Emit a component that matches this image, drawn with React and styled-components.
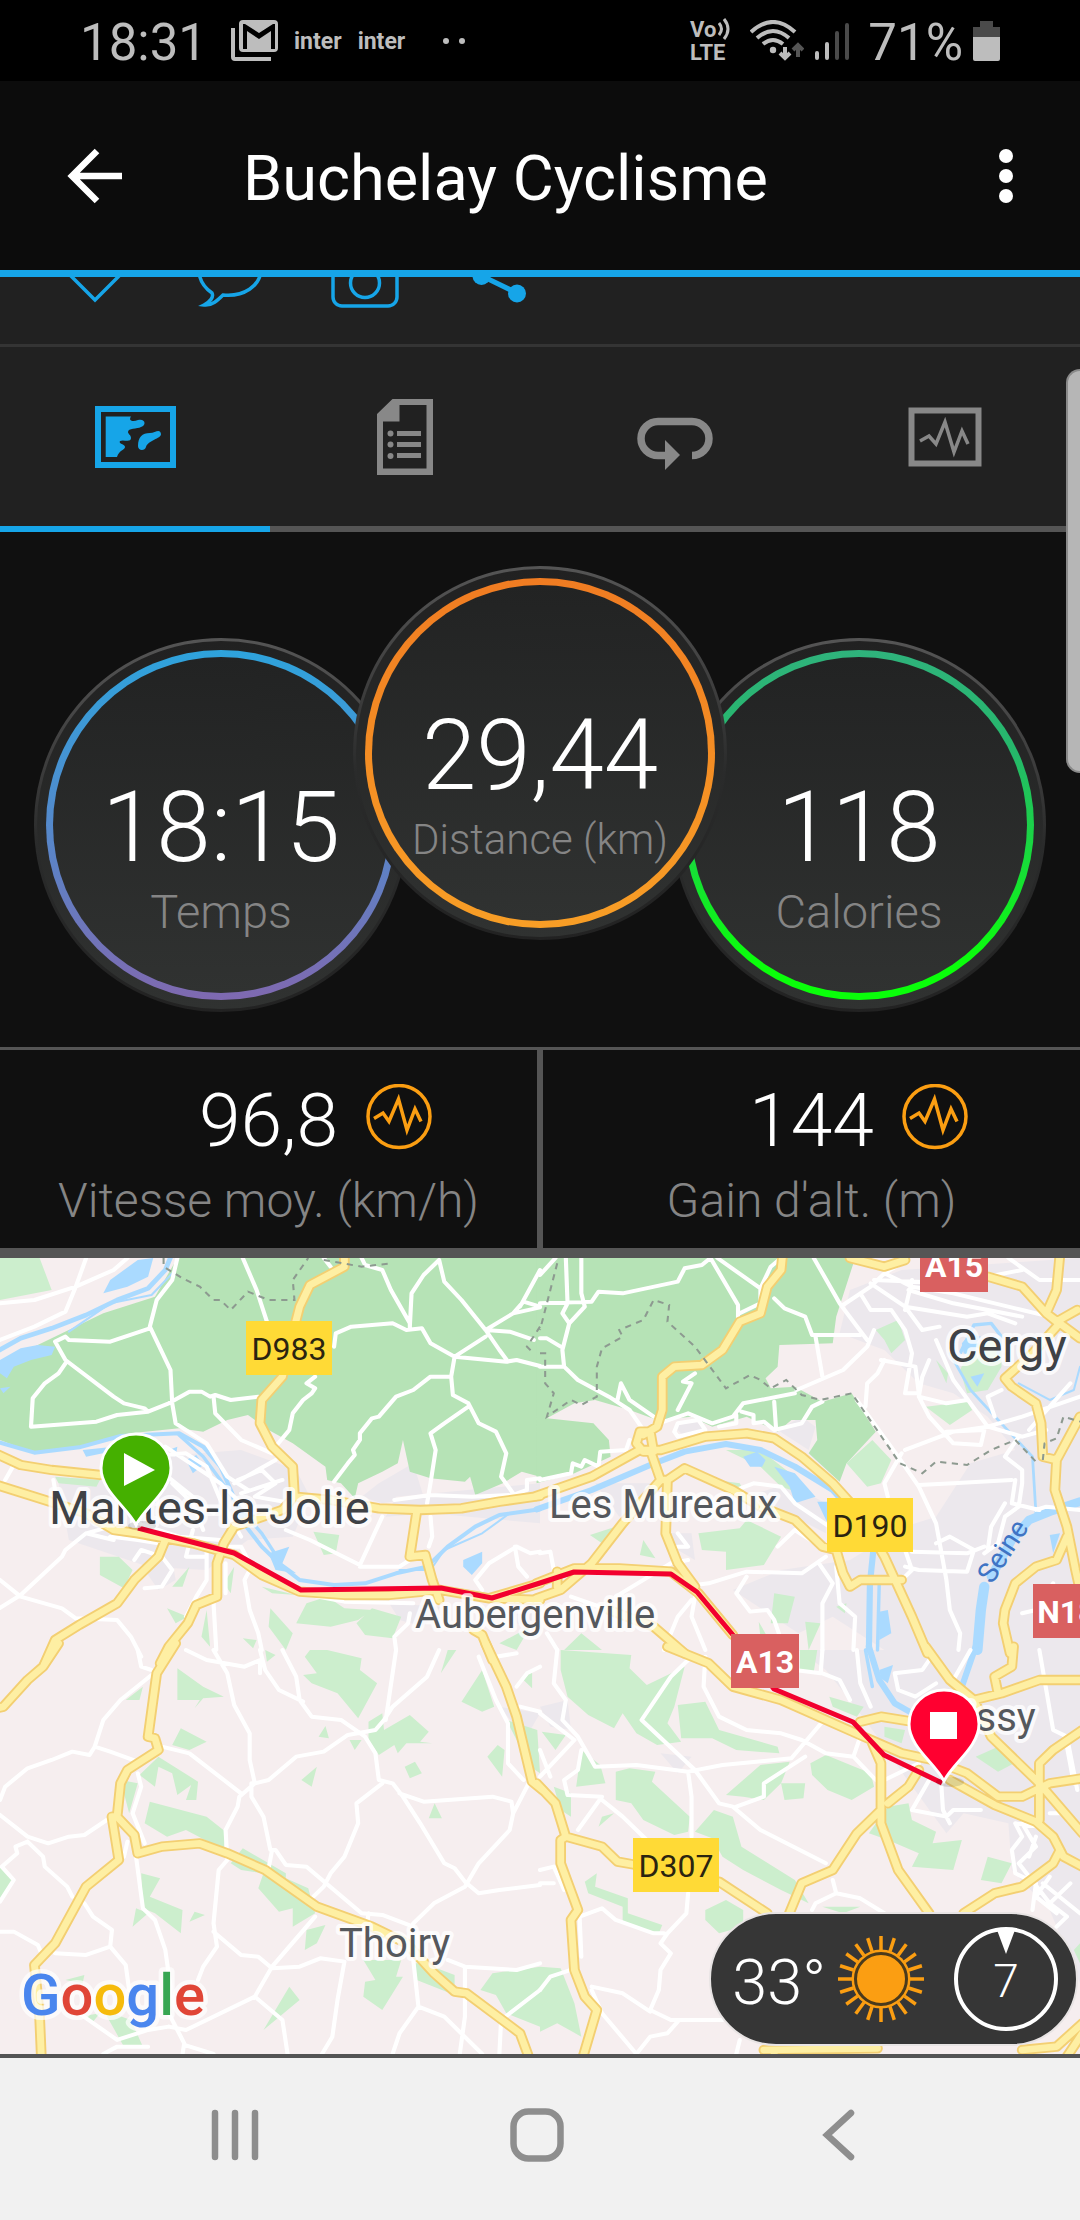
import React from 'react';
import styled, { createGlobalStyle } from 'styled-components';

const colors = {
  accent: '#16a5e8',
  orange: '#fb9e12',
  line: '#555555',
  surface: '#212121',
  base: '#101010',
  muted: '#858585',
  status: '#bdbdbd',
};

const GlobalStyle = createGlobalStyle`
  *, *::before, *::after { box-sizing: border-box; }
  body {
    margin: 0;
    background: #f1f1f1;
    font-family: Roboto, "Noto Sans", sans-serif;
    color: #fff;
  }
  button {
    margin: 0;
    padding: 0;
    border: 0;
    background: none;
    color: inherit;
    font: inherit;
    cursor: pointer;
  }
  svg { display: block; flex: none; }
`;

const Screen = styled.div`
  display: flex;
  flex-direction: column;
  min-height: 100vh;
`;

/* ---------- status bar ---------- */

const StatusBar = styled.div`
  display: flex;
  align-items: center;
  justify-content: space-between;
  height: 81px;
  padding: 0 80px;
  background: #000;
  color: ${colors.status};
`;

const StatusGroup = styled.div`
  display: flex;
  align-items: center;
  gap: ${(p) => p.$gap}px;
`;

const StatusText = styled.span`
  padding: ${(p) => (p.$clock ? '4px 8px 0 0' : '4px 0 0 8px')};
  font-size: 51px;
  line-height: 60px;
`;

const InterMark = styled.span`
  padding-top: 2px;
  font-size: 23px;
  line-height: 28px;
  font-weight: 700;
`;

const VoLte = styled.span`
  display: flex;
  flex-direction: column;
  padding-right: 10px;
  font-size: 22px;
  line-height: 23px;
  font-weight: 700;
`;

const VoLine = styled.span`
  display: flex;
  gap: 2px;
`;

/* ---------- header ---------- */

const Header = styled.header`
  display: flex;
  align-items: center;
  height: 196px;
  padding: 0 42px 0 63px;
  background: #0c0c0c;
  border-bottom: 7px solid ${colors.accent};
`;

const IconButton = styled.button`
  display: flex;
  align-items: center;
  justify-content: center;
  width: 64px;
  height: 64px;
`;

const Title = styled.h1`
  flex: 1;
  margin: 0;
  padding: 6px 0 0 116px;
  font-size: 63px;
  line-height: 72px;
  font-weight: 400;
`;

/* ---------- scrolled content ---------- */

const Content = styled.main`
  position: relative;
  flex: 1;
`;

const ScrollThumb = styled.div`
  position: absolute;
  z-index: 2;
  top: 92px;
  right: 0;
  width: 14px;
  height: 404px;
  background: #b6b6b6;
  border: 2px solid #8a8a8a;
  border-right: 0;
  border-radius: 14px 0 0 14px;
`;

const Actions = styled.div`
  display: flex;
  align-items: flex-end;
  height: 70px;
  padding: 0 27px 32px;
  overflow: hidden;
  background: ${colors.surface};
  border-bottom: 3px solid #343434;
`;

const ActionButton = styled.button`
  display: flex;
  justify-content: center;
  width: 135px;
  color: ${colors.accent};
`;

const Tabs = styled.div`
  display: grid;
  grid-template-columns: repeat(4, 1fr);
  background: ${colors.surface};
`;

const Tab = styled.button`
  display: flex;
  align-items: center;
  justify-content: center;
  height: 185px;
  color: ${(p) => (p.$active ? colors.accent : '#888')};
  border-bottom: 6px solid ${(p) => (p.$active ? colors.accent : colors.line)};
`;

const Dials = styled.section`
  display: flex;
  justify-content: center;
  align-items: flex-start;
  padding: 34px 0 35px;
  background: ${colors.base};
`;

const Dial = styled.div`
  position: relative;
  z-index: ${(p) => (p.$raised ? 1 : 0)};
  width: 374px;
  height: 374px;
  margin: ${(p) => (p.$raised ? '0 -55px' : '72px 0 0')};
  padding: 9px;
  border: 3px solid transparent;
  border-radius: 50%;
  background:
    linear-gradient(#212121, #303231) padding-box,
    linear-gradient(#555 0%, #3c3c3c 35%, #2a2b2b 55%, #222 100%) border-box;
`;

const Ring = styled.div`
  display: flex;
  flex-direction: column;
  align-items: center;
  gap: 4px;
  height: 100%;
  padding-top: 121px;
  border: 7px solid transparent;
  border-radius: 50%;
  background:
    linear-gradient(#222323, #303231) padding-box,
    linear-gradient(${(p) => p.$ring}) border-box;
`;

const DialValue = styled.span`
  font-size: 98px;
  line-height: 100px;
  font-weight: 300;
`;

const DialLabel = styled.span`
  font-size: ${(p) => (p.$long ? 42 : 47)}px;
  line-height: 60px;
  font-weight: 300;
  white-space: nowrap;
  color: ${colors.muted};
`;

const Measures = styled.section`
  display: grid;
  grid-template-columns: 1fr 1fr;
  gap: 6px;
  border-top: 3px solid ${colors.line};
  border-bottom: 10px solid ${colors.line};
  background: ${colors.line};
`;

const Measure = styled.div`
  display: flex;
  flex-direction: column;
  gap: 11px;
  padding: 30px 0 17px;
  background: ${colors.base};
`;

const MeasureRow = styled.div`
  display: grid;
  grid-template-columns: 1fr auto 1fr;
  align-items: center;
  column-gap: 28px;
`;

const MeasureValue = styled.span`
  grid-column: 2;
  font-size: 75px;
  line-height: 80px;
  font-weight: 300;
`;

const MeasureLabel = styled.span`
  font-size: 48px;
  line-height: 60px;
  font-weight: 300;
  text-align: center;
  color: ${colors.muted};
`;

/* ---------- map ---------- */

const MapPanel = styled.section`
  position: relative;
  border-bottom: 4px solid #545454;
`;

const MapCanvas = styled.svg`
  width: 100%;
  height: auto;
  font-family: Roboto, "Noto Sans", sans-serif;
`;

const Weather = styled.div`
  position: absolute;
  right: 2px;
  bottom: 8px;
  display: flex;
  align-items: center;
  height: 134px;
  padding: 0 17px 0 21px;
  gap: 12px;
  background: #363636;
  border: 2px solid #e8e4e4;
  border-radius: 67px;
`;

const Temperature = styled.span`
  font-size: 63px;
  line-height: 72px;
  font-weight: 300;
  padding-top: 8px;
`;

const Wind = styled.div`
  display: grid;
  place-items: center;
  margin-left: 17px;
  > * { grid-area: 1 / 1; }
`;

const WindValue = styled.span`
  font-size: 46px;
  line-height: 56px;
  font-weight: 300;
  padding-top: 4px;
`;

/* ---------- navigation bar ---------- */

const NavBar = styled.nav`
  display: flex;
  align-items: center;
  justify-content: center;
  gap: 238px;
  height: 162px;
  padding-right: 6px;
  padding-bottom: 8px;
  background: #f1f1f1;
  color: #8e8e8e;
`;

/* Map geometry, cut in four tiles of 1568 x 1200 units each */
const TILES = [
  {
    transform: 'translate(0 -8) scale(.3444 .3333)',
    urban:
      'M450 620 700 600 860 660 900 740 850 860 720 870 600 960 430 950 200 870 170 700Z M1150 740 1568 700 1568 820 1250 790 1120 800Z M1200 640 1100 700 1050 740 1110 760 1230 740Z M420 960 500 930 510 990 460 1020Z M1130 1060 1280 1070 1230 1130 1160 1110Z M1480 1050 1568 1060 1568 1140 1500 1120Z',
    forest:
      'M515 24 1568 24 1568 680 1515 665 1460 700 1380 735 1365 680 1350 695 1250 685 1190 665 1170 570 1155 640 1110 665 1040 700 1030 745 990 700 950 690 945 650 850 580 780 540 720 495 660 510 590 545 520 535 380 550 230 590 100 610 0 570 0 340 150 265 300 190 450 140Z',
    park:
      'M0 24 115 24 150 120 0 150Z M290 920 345 920 385 960 360 1015 290 975Z M910 845 985 855 975 910 940 915Z M890 1060 950 1040 1000 1075 1080 1080 1040 1110 960 1130 860 1120Z M1035 1120 1080 1075 1165 1100 1140 1165 1060 1155Z M785 1075 850 1150 830 1200 780 1130Z M500 1010 550 950 530 1010Z M650 1000 680 950 670 1030Z M160 680 290 690 280 710 170 700Z M485 1075 545 1100 510 1120Z M600 1080 610 1190 585 1160Z M760 1010 860 1035 790 1030Z M705 1165 745 1170 735 1195Z M1390 1100 1400 1070 1420 1090Z M1450 1180 1540 1130 1500 1200Z',
    lake:
      'M300 130 320 90 400 30 445 24 430 80 370 110Z M0 330 60 295 110 285 160 290 150 315 90 330 40 350 20 385 0 370Z M0 415 30 410 10 430Z M540 630 570 615 590 645 560 670Z M1345 930 1400 905 1400 940 1370 975 1345 950Z M780 910 840 890 820 940 860 970 800 960Z M240 600 330 590 320 605 250 620Z M490 600 515 590 510 620Z',
    rivers: [
      [14, 'M-10 305 60 265 150 235 250 195 340 150 430 115 480 60 500 10'],
      [6, 'M200 245 320 160 440 135 500 70'],
      [12, 'M-10 575 100 608 230 592 350 558 520 550 590 590 640 650 670 720 715 830 760 890 820 950 870 990 970 1005 1060 1000 1150 970 1240 950 1300 890 1380 830 1450 795 1568 778'],
      [10, 'M520 555 590 620 640 690 700 780 760 850 810 930'],
      [6, 'M1160 960 1250 960 1290 900 1400 850 1480 790'],
    ],
    white:
      'M0 160 100 150 220 110 330 60 370 24M250 24 220 110 190 185 100 230 0 270M515 24 500 90 455 150 435 230 495 360 500 460 510 520 600 580 660 680 720 720M435 235 320 275 200 270 190 260 160 275 190 330 330 440 360 460 420 475 430 485 340 495 280 515 90 530 95 445 130 400 170 370 190 340M430 485 490 460 550 425 585 425 610 440 625 435 670 450 750 440M620 440 625 490 700 570 790 610M705 24 745 120 775 215M940 24 960 50M915 380 890 400 915 415 905 430 880 450 850 490 840 540 800 590M970 290 975 250 1020 230 1140 220 1180 240 1225 235 1250 280 1320 320 1470 335 1500 330 1568 348M1050 24 1060 45 1110 60 1135 120 1190 220 1190 235M1190 230 1195 130 1230 75 1275 30 1290 95 1340 150 1410 240 1450 300 1475 335M1320 320 1410 260M1410 240 1490 190 1520 155 1568 170M1490 190 1568 172M1410 240 1480 245 1550 270M1568 60 1510 170M1320 320 1310 380 1315 435 1360 460 1390 520 1440 545 1470 610 1455 680 1490 730M1310 380 1250 380 1200 420 1150 440 1100 500 1080 505 1045 550 1045 570 1025 600 1030 615 1010 640 970 695M1360 470 1290 520 1250 550 1265 600 1250 700 1240 760M1145 750 1250 735 1370 740 1490 735 1530 720 1530 690 1568 685M1110 800 1045 945 900 870 830 840M1045 950 1160 950 1190 930M1250 800 1255 860 1245 890M0 990 60 1040 180 1075 220 1105 340 1110 380 1160 410 1220M-10 1080 60 1035 180 920 190 900 250 850 320 830M390 930 410 900 470 920 500 960 470 1010 420 1015M600 900 600 990 570 1040 540 1100M655 940 655 1030M620 1060 628 1200M640 890 700 890 730 950 710 990 725 1080 750 1150 760 1200M870 1030 1000 1055 1200 1060M1190 1090 1185 1120 1145 1160 1150 1200M1568 905 1540 910 1500 890 1420 940 1380 990 1400 1020M1495 890 1505 950 1530 980M40 645 15 690M155 690 160 720M450 650 620 790M480 590 640 700 740 800M420 620 540 610 600 650 640 750 700 860M500 700 560 760 590 840M690 690 760 660 800 700 740 740 850 760M680 700 800 630M700 730 820 690M560 840 540 920 600 920M400 820 520 860 640 870M320 860 400 870 460 880M250 850 330 870',
    yellow:
      'M-10 612 60 645 150 660 290 675M-10 705 130 750 250 790 330 840 400 850 560 880 680 915 760 975 870 1025 1000 1035 1130 1035 1280 1020 1420 1045 1568 1000M1000 10 1000 50 900 105 870 170 850 250 820 380 760 450 755 520 790 590 850 650 855 740 820 780 680 830 650 880 630 940 630 1040 570 1065 545 1120 490 1190 465 1240M480 870 460 920 390 990 340 1060 230 1125 160 1170 130 1240M855 740 960 750 1100 775 1220 780 1340 775 1450 755 1568 738M1210 785 1190 920 1235 915 1255 990 1275 1050M1375 1140 1400 1155 1430 1230M1430 1045 1568 1050',
    border:
      'M475 24 475 50 530 85 580 110 620 150 640 150 670 180 720 125 780 150 855 150 850 90 895 24M940 30 1050 50 1140 40M1568 230 1530 290 1550 310',
  },
  {
    transform: 'translate(540 -8) scale(.3444 .3333)',
    urban:
      'M900 120 1050 60 1568 24 1568 1200 1000 1200 850 1100 750 1150 560 1020 700 960 900 930 1060 830 1150 800 1250 640 1380 600 1300 500 1200 430 1100 400 1000 300 870 250Z M390 530 450 510 480 540 420 560Z M600 740 720 700 830 760 830 850 700 780Z M690 540 760 500 800 530 780 600Z M160 700 330 700 340 760 230 800Z M370 850 440 850 450 930 400 900Z',
    forest:
      'M-10 24 915 24 860 200 850 280 695 285 690 350 655 385 670 415 740 410 820 455 905 430 975 545 890 640 870 695 780 610 805 570 800 510 730 510 690 545 600 500 500 530 440 500 340 510 260 480 160 450 100 460 20 505 155 520 200 570 205 620 100 670 -10 700Z',
    park:
      'M890 640 965 570 1020 630 990 700 950 710Z M460 850 580 835 600 810 700 860 650 945 540 960 540 905 470 900Z M290 915 300 870 335 925Z M145 855 250 820 180 880Z M1120 470 1240 455 1255 480 1190 525Z M975 240 1040 210 1060 270 1020 310 1000 270Z M1250 290 1340 260 1340 350 1300 420 1240 430 1220 360Z M680 1030 740 1040 720 1120 670 1120Z M770 1115 815 1120 780 1200Z M860 1070 890 1060 885 1090Z M510 690 580 700 600 740 540 730Z M70 1200 120 1150 180 1200Z M540 600 640 600 740 680 790 740 700 710 640 650Z M1150 330 1185 370 1180 400Z M635 1115 660 1160 640 1160Z',
    lake:
      'M590 620 630 605 655 630 645 650 610 650Z M680 650 740 670 800 740 740 760 725 710Z M805 755 835 755 835 820Z M985 1085 1010 1080 1020 1150 985 1170Z M1480 855 1510 850 1490 910Z M1225 280 1250 250 1280 260 1260 320 1230 310Z M1250 380 1290 370 1270 410Z',
    rivers: [
      [18, 'M-10 778 150 720 320 645 420 605 540 582 640 600 740 650 850 720 920 800 968 900 958 1000 955 1200'],
      [10, 'M985 1000 980 1200'],
      [8, 'M1190 310 1250 420 1330 510 1430 620 1440 790'],
      [6, 'M1568 350 1550 420 1480 450 1390 400'],
      [10, 'M1220 310 1260 225 1310 220 1340 260 1330 310'],
      [26, 'M1568 755 1480 785 1420 810 1370 870 1310 980'],
      [30, 'M1290 1010 1280 1080 1270 1200'],
    ],
    white:
      'M75 24 80 160 65 190 85 220 65 300 70 350 0 350M0 160 150 155 170 125 240 130 400 95 420 55 470 45 495 24M120 24 120 130 130 170 85 220M0 265 20 265 60 290M0 75 45 24M70 350 110 390 200 440 260 480 300 540M225 450 235 400 260 450 330 500M495 24 575 165 575 215M515 24 640 115 640 160 580 190M640 115 670 50 700 24M680 145 710 175 770 200 790 255 930 255M795 24 870 160 950 270M800 260 820 380M745 420 880 360 950 290 970 240M880 165 960 110 1000 70 1050 40M960 100 1060 170 1110 240 1160 230M1000 70 1080 110 1200 130 1400 180 1480 200M930 130 960 180 1020 180 1060 240 1080 310 1060 430 1100 430 1090 350M970 90 1200 100 1400 60M1070 120 1200 160 1400 200M1060 170 1240 200 1300 190 1380 220M1080 90 1060 180M360 515 430 490 500 520 560 500 590 460 740 430M400 480 440 400 415 395 450 370M585 485 620 495 620 520 650 515 680 540 760 520 790 470 820 455M680 455 685 530M520 530 570 520 570 495M0 690 90 670 95 640 120 650 130 630 170 650 175 605 250 600 260 570M1000 330 980 370 950 400 945 470M990 330 1090 350M1130 330 1110 380 1100 440 1130 500 1200 580 1280 585 1290 540 1180 545M1100 440 1180 460 1240 450M1390 560 1350 620 1400 660 1400 700 1390 770 1350 800 1330 880 1290 910M920 450 1040 620 1100 710 1150 820 1180 990 1190 1080 1220 1150 1215 1200M1100 705 1200 700 1370 690M1060 600 1200 545 1300 530 1400 500 1568 440M1050 610 1000 700 1010 740M1150 270 1200 390 1300 530 1400 560 1470 540M1080 905 1240 910 1290 890M1060 950 1100 960 1240 965 1260 900 1190 860 1150 880M1380 690 1370 760 1450 780M1350 760 1310 830 1300 900M1568 780 1470 770 1440 780M830 920 760 970 600 965 490 1000 450 1005M600 980 570 1030 610 1085 660 1080 680 1110 700 1170M810 940 850 1000 820 1060 820 1200M860 950 870 1060 915 1100 910 1200M800 880 740 840 690 890M570 720 620 700 700 710 740 760 840 830M450 1040 440 1100 480 1200M400 850 430 890 400 890M390 545 400 520 460 510 480 540 400 560 390 545M1060 900 1080 960 1050 990M0 910 30 905 40 960M440 1050 400 1100 360 1200M1490 1000 1440 1080 1400 1090M1360 24 1450 90 1568 90M1340 420 1300 440 1320 500M1540 400 1480 470 1420 540M220 1040 380 940 430 930M90 1040 200 1080M20 1150 50 1200',
    yellow:
      'M705 10 700 60 660 110 640 190 580 215 530 300 470 345 390 350 355 380 355 480 340 530 300 555M-10 738 150 680 290 600 350 600 480 560 600 550 680 565 760 620 850 700 920 780 1000 920 1040 1010 1080 1100 1125 1210M290 545 320 545 330 605 300 605 280 580ZM320 600 350 690 370 690 365 850 400 940 450 1010M350 690 240 820 150 940 60 1020 -10 1045M370 690 420 655 560 720 640 770 740 810 820 890 860 900 880 970 900 1010 930 990 1050 990M-10 1000 100 955 230 955 380 965 460 1030 560 1155M50 965 50 1010M900 24 1000 50 1060 30M1300 80 1400 110 1470 190 1568 265M1510 10 1500 120 1470 190 1500 215 1560 180M1500 230 1430 310 1350 385 1370 410 1440 460 1455 520 1460 620 1500 630 1568 500M1500 625 1495 720 1530 830 1555 960 1568 1020M1530 860 1500 930 1440 950 1380 1000 1350 1080 1345 1120 1365 1210M200 1080 330 1130 420 1210',
    border:
      'M50 40 0 240M0 310 15 310 15 400 40 430 20 500 90 450 120 465 165 440 165 350 180 295 240 260 230 240 300 210 330 150 375 165 370 215 450 290 540 415 610 375 640 390 670 415 715 390 760 435 815 450 905 430 1045 640 1110 670 1150 635 1240 645 1310 600 1380 570 1440 635M1460 630 1465 580 1500 565 1520 500 1568 515',
  },
  {
    transform: 'translate(0 392) scale(.3444 .3333)',
    urban: 'M1450 170 1568 190 1540 240 1490 220Z',
    forest: '',
    park:
      'M515 55 590 110 650 140 590 145 565 175 580 150 515 150Z M365 150 415 110 405 150Z M500 285 525 235 600 275 550 300Z M405 375 460 320 575 395 570 450 540 450 555 405 515 435 500 370 460 350 450 410Z M435 455 600 500 655 545 650 600 540 540 485 560 420 520Z M350 390 400 400 375 490Z M885 20 900 0 950 0 1050 25 1045 60 1095 100 1040 205 980 130 905 100 880 75 920 70Z M1070 215 1110 190 1115 240 1190 195 1245 245 1220 275 1255 280 1180 280 1155 310 1145 285 1100 315 1070 270Z M925 260 945 228 955 265Z M1015 270 1050 270 1030 300Z M875 390 920 350 905 410Z M1175 350 1205 335 1225 370 1190 385Z M1245 505 1262 460 1283 505Z M1340 155 1400 60 1435 170 1400 185Z M1415 320 1445 285 1465 300 1458 380Z M1280 70 1300 0 1325 0Z M1470 210 1560 240 1568 370 1540 350Z M1520 90 1545 60 1545 115Z M670 640 705 595 830 670 830 685 895 715 915 790 850 830 850 775 810 785 750 715 765 670 700 660Z M410 670 465 685 435 740 530 780 525 850 450 790 415 775Z M385 830 395 775 430 790Z M550 815 565 785 595 795Z M0 650 40 690 0 750Z M890 840 945 825 920 880 885 900Z M1055 930 1165 930 1150 980 1170 980 1110 1080 1055 1040 1060 995 1090 990Z M1200 940 1230 940 1320 975 1320 1035 1210 990Z M1395 1020 1430 970 1568 950 1568 1130 1470 1090 1440 1035Z M765 1140 840 1010 870 1050Z M190 990 245 975 240 1000Z M300 1080 380 1110 415 1190 360 1190Z M230 1100 290 1090 270 1115Z M770 0 800 15 775 35Z',
    lake: '',
    rivers: [],
    white:
      'M400 0 410 50 440 60M440 75 350 150 300 210 275 290 320 305 400 335M275 290 260 315 210 305 150 330 80 355 15 410 0 450M0 495 80 560 140 580 200 560 245 555 310 510M80 575 45 590 50 610 5 650 40 690 0 755M80 575 125 620 130 650 195 710 210 740M245 760 270 800 325 840 320 890 250 915 160 910M320 890 365 945 375 1020M0 845 40 845 110 885 120 910M540 0 600 30 710 50 755 30 755 70M620 0 660 70 680 165 725 250 725 330 740 400 780 390 860 320 940 305 1010 255 1090 240 1115 210 1140 170 1240 80 1275 0M1150 0 1120 210M820 0 860 80 870 150 905 200 990 210 1060 260 1090 310 1100 390 1140 400 1170 440 1220 520 1290 640 1320 655 1350 695 1390 730 1450 720 1568 705M755 0 770 60 810 120 880 155M470 290 550 310 700 430M740 400 695 440 690 470 655 540 660 630 635 660 620 820 630 890 590 950 575 990M730 400 730 440 765 500 785 600 800 600 830 645 890 650 1050 790 1110 795 1200 830M790 600 780 655M1110 400 1035 460 1040 520 1000 620 960 670 940 710 910 740M1160 430 1230 455 1430 440 1485 455 1490 490 1480 540 1390 640 1350 710 1260 760 1200 820M1490 490 1535 400M1390 20 1440 150 1475 220 1475 340 1520 390M400 370 410 410 385 490 420 580M370 575 360 620M395 620 415 775 450 810 480 900 495 1010 490 1090 535 1180 530 1212M915 800 790 950 740 1040 540 1140 490 1130M620 845 700 915 750 920 790 955 870 950 930 925 1000 935 980 1050 965 1160 935 1212M740 1040 820 1110 835 1212M1200 930 1215 1070 1160 1150 1140 1212M1215 1070 1290 1100 1400 1212M1300 930 1350 950 1500 960 1568 940M1350 950 1350 1100 1335 1212M1568 1020 1455 1110 1450 1212M230 1090 340 1170 430 1140 490 1130M300 1212 340 1190 430 1190M535 1185 620 1212M1500 110 1530 70 1568 50M1510 170 1568 185M1440 20 1500 10M1070 790 1065 830',
    yellow:
      'M170 -20 125 50 80 90 10 170 -10 175M510 -20 455 70 430 260 450 265 460 300 370 360 350 400 340 500 325 500 345 630 250 710 160 880 100 945 115 1100 120 1220M340 500 390 555 400 610 470 590 580 580 660 610 770 660 920 770 1080 830 1180 880 1260 970 1320 1025 1355 1030 1510 1150 1535 1220M1410 -20 1470 110 1500 200 1545 395 1575 420',
    border: '',
  },
  {
    transform: 'translate(540 392) scale(.3444 .3333)',
    urban:
      'M750 0 1568 0 1568 1000 1480 780 1370 660 1360 520 1230 490 1180 550 1060 380 980 260 900 150 830 60Z M0 170 80 150 90 240 30 230Z M350 310 440 320 400 370Z',
    forest: '',
    park:
      'M60 0 265 15 260 55 310 105 420 50 390 170 370 220 410 275 340 285 280 250 240 190 215 235 140 195 80 140 60 60Z M400 165 480 155 520 240 690 290 695 310 570 300 500 265 410 265Z M120 300 175 345 190 400 105 410Z M540 435 640 345 725 335 700 400 650 450 590 440Z M700 400 770 400 765 445 710 450Z M785 340 830 315 960 370 970 410 905 450 835 420 790 375Z M220 365 260 355 335 365 325 395 435 500 430 545 390 555 300 510 265 460 220 450Z M450 545 505 480 560 500 585 590 740 690 780 760 700 720 590 660 530 620 500 565Z M130 695 165 670 160 710 255 745 255 790 355 825 345 850 240 820 240 770 140 730Z M480 780 540 750 590 780 590 830 520 850 480 810Z M0 950 60 955 100 1060 120 1160 50 1120 0 1145Z M755 0 805 0 795 65 755 60Z M840 140 940 170 920 200 850 170Z M1010 470 1070 460 1080 510 1150 545 1140 580 1225 570 1200 660 1080 650 1100 610 1010 570 955 550Z M1265 320 1330 290 1385 335 1330 365Z M1280 690 1300 620 1370 640 1340 700Z M5 245 75 255 45 300Z M170 530 215 490 180 500Z M1000 230 1060 240 1050 280 1000 260Z M820 770 930 770 880 790Z M40 410 90 430 90 500 60 480Z M35 650 90 690 60 710Z M1550 900 1568 880 1568 940Z',
    lake: 'M985 60 1025 45 1010 100 990 85Z',
    rivers: [
      [18, 'M955 -10 985 90 1030 160 1090 195'],
      [10, 'M945 0 965 110'],
      [18, 'M1265 -10 1225 110'],
    ],
    white:
      'M430 30 380 80 295 210 450 360 520 460 560 470 640 540 830 640M50 0 40 100 75 150 65 210 110 260 160 350 280 345 430 365 530 345 730 325 820 215M0 190 100 270 0 380M120 300 110 360 70 390 80 435 180 440 110 540M430 365 440 440 440 560M180 450 240 500 310 570M480 20 475 110 520 200 600 240 700 250 760 270 830 310 910 320 975 390M910 320 930 260M770 320 650 400 650 440 570 470M820 0 815 70 740 60M820 70 870 90 900 150M920 0 930 100 960 170M430 730 425 790 370 850 350 880 380 910 350 960 345 1020 320 1080 380 1110 530 1110M120 920 115 800 180 775 220 810 330 850 360 850M0 660 40 650 70 720M0 700 40 700M90 960 30 980 0 1020M150 1010 240 1030 320 1085M150 1020 180 1090 280 1212 320 1160 370 1150 400 1115M850 690 860 730 800 760 790 780M860 730 930 745 1000 790M1130 390 1080 480 1180 500 1200 480 1280 480M1165 400 1170 480 1190 520M1450 0 1490 240 1530 260 1560 420M1030 70 1040 120 1090 140 1150 100M1030 70 1110 60 1130 30M1380 520 1400 560 1370 600 1380 670 1440 700 1430 780M1400 520 1440 590 1390 640 1480 760 1530 800 1500 830M1480 680 1440 740 1500 790M1460 700 1568 790M1480 760 1540 700M1440 560 1420 620M1380 520 1450 530M1000 390 1100 340M580 1170 570 1212M1250 0 1200 90M1480 490 1520 490M0 300 30 380M1530 290 1550 400',
    yellow:
      'M370 -10 490 40 560 110 700 150 940 260 1050 310 1140 330 1240 370 1330 440 1400 440 1480 400 1575 385M930 215 990 200 1080 215M965 280 990 340 990 520 1040 660 1130 790M985 485 920 550 850 660 760 700 720 800M1010 460 1070 410 1100 360M1120 -10 1190 90 1260 150 1310 260 1450 400 1575 550M1375 -10 1370 50 1320 80 1330 130M1260 150 1340 130 1450 90 1575 90M1190 390 1320 465 1440 515 1490 560 1520 620 1575 650M1450 510 1450 340 1490 300 1575 240M1510 600 1490 640 1400 710 1320 730 1230 790M-10 400 45 460 75 560 60 570 60 640 110 780 90 810 100 960 130 1040 165 1080 125 1220M75 560 180 590 225 635 280 645M520 695 660 790M650 1200 980 1195M680 1200 680 1220M1400 1200 1500 1190 1575 1120M1530 1220 1575 1150',
    border: '',
  },
];

const SHIELDS = [
  { text: 'D983', x: 246, y: 63, w: 86 },
  { text: 'D190', x: 827, y: 240, w: 86 },
  { text: 'D307', x: 633, y: 580, w: 86 },
  { text: 'A15', x: 920, y: -20, w: 68, red: true },
  { text: 'A13', x: 731, y: 376, w: 68, red: true },
  { text: 'N184', x: 1033, y: 326, w: 86, red: true },
];

const PLACES = [
  { text: 'Mantes-la-Jolie', x: 49, y: 266, size: 47, fill: '#3f4246' },
  { text: 'Cergy', x: 947, y: 104, size: 47, fill: '#3f4246' },
  { text: 'Les Mureaux', x: 549, y: 260, size: 40, fill: '#55585d' },
  { text: 'Aubergenville', x: 415, y: 370, size: 40, fill: '#55585d' },
  { text: 'Thoiry', x: 339, y: 699, size: 40, fill: '#55585d' },
  { text: 'Poissy', x: 918, y: 473, size: 40, fill: '#55585d' },
];

const Layer = ({ name, ...style }) =>
  TILES.map((tile) => (
    <g key={tile.transform} transform={tile.transform}>
      <path d={tile[name]} {...style} />
    </g>
  ));

const roadStyle = { fill: 'none', strokeLinecap: 'round', strokeLinejoin: 'round' };

const Pin = ({ x, y, color, children }) => (
  <g transform={`translate(${x} ${y})`}>
    <ellipse cx="6" cy="1" rx="14" ry="5" fill="#000" opacity=".12" />
    <path
      d="M0 0C-9-18-35-34-35-57A35 34 0 0 1 35-57C35-34 9-18 0 0Z"
      fill={color}
      stroke="#fff"
      strokeWidth="3"
    />
    {children}
  </g>
);

function RouteMap() {
  return (
    <MapCanvas viewBox="0 0 1080 796" role="img" aria-label="Carte du parcours">
      <rect width="1080" height="796" fill="#f6eeef" />
      <Layer name="urban" fill="#ece8ed" />
      <Layer name="forest" fill="#b6e3b6" />
      <Layer name="park" fill="#cceecd" />
      <Layer name="lake" fill="#aadaff" />
      {TILES.map((tile) => (
        <g key={tile.transform} transform={tile.transform} stroke="#aadaff" {...roadStyle}>
          {tile.rivers.map(([width, d]) => (
            <path key={d} d={d} strokeWidth={width} />
          ))}
        </g>
      ))}
      <Layer name="white" stroke="#fff" strokeWidth="12" {...roadStyle} />
      <Layer name="yellow" stroke="#f3cf72" strokeWidth="31" {...roadStyle} />
      <Layer name="yellow" stroke="#feefa3" strokeWidth="20" {...roadStyle} />
      <Layer name="border" stroke="#8d9a90" strokeWidth="6" strokeDasharray="18 16" fill="none" />

      <polyline
        points="138,270 234,295 301,332 441,330 492,340 540,325 574,314 671,316 697,334 733,377 774,431 853,464 884,497 942,525"
        fill="none"
        stroke="#f2002e"
        strokeWidth="5"
        strokeLinejoin="round"
      />

      {SHIELDS.map((s) => (
        <g key={s.text}>
          <rect x={s.x} y={s.y} width={s.w} height="54" fill={s.red ? '#d96060' : '#ffda36'} />
          <text
            x={s.x + s.w / 2}
            y={s.y + 39}
            textAnchor="middle"
            fontSize="32"
            fontWeight={s.red ? 700 : 400}
            fill={s.red ? '#fff' : '#2b2410'}
          >
            {s.text}
          </text>
        </g>
      ))}

      {PLACES.map((p) => (
        <text
          key={p.text}
          x={p.x}
          y={p.y}
          fontSize={p.size}
          fill={p.fill}
          stroke="#fff"
          strokeOpacity=".8"
          strokeWidth="8"
          strokeLinejoin="round"
          paintOrder="stroke"
        >
          {p.text}
        </text>
      ))}
      <text transform="translate(992 327) rotate(-57)" fontSize="28" fill="#3f74c4">
        Seine
      </text>

      <Pin x={136} y={267} color="#45b000">
        <path d="M-12-72 19-55-12-39Z" fill="#fff" />
      </Pin>
      <Pin x={944} y={523} color="#ff0030">
        <rect x="-14" y="-69" width="27" height="27" fill="#fff" />
      </Pin>

      <text
        x="21"
        y="757"
        fontSize="58"
        fontWeight="500"
        stroke="#fff"
        strokeOpacity=".7"
        strokeWidth="9"
        strokeLinejoin="round"
        paintOrder="stroke"
      >
        <tspan fill="#4a86ee">G</tspan>
        <tspan fill="#e04637">o</tspan>
        <tspan fill="#f6bb0c">o</tspan>
        <tspan fill="#4a86ee">g</tspan>
        <tspan fill="#37a652">l</tspan>
        <tspan fill="#e04637">e</tspan>
      </text>
    </MapCanvas>
  );
}

/* ---------- icons ---------- */

const GmailIcon = () => (
  <svg width="47" height="41" viewBox="0 0 47 41" fill={colors.status}>
    <path d="M0 8h4v29h36v4H4a4 4 0 0 1-4-4Z" />
    <path
      fillRule="evenodd"
      d="M12 0h31a4 4 0 0 1 4 4v24a4 4 0 0 1-4 4H12a4 4 0 0 1-4-4V4a4 4 0 0 1 4-4ZM12 4v25h4V11l12 8 12-8v18h4V4h-2L28 13 14 4Z"
    />
  </svg>
);

const DotsIcon = () => (
  <svg width="60" height="8" viewBox="0 0 60 8" fill={colors.status}>
    <circle cx="25" cy="4" r="3" />
    <circle cx="41" cy="4" r="3" />
  </svg>
);

const WavesIcon = () => (
  <svg width="12" height="22" viewBox="0 0 12 22" fill="none" stroke={colors.status} strokeWidth="3">
    <path d="M1 5Q6 11 1 17M6 1Q14 11 6 21" />
  </svg>
);

const WifiIcon = () => (
  <svg width="54" height="42" viewBox="0 0 54 42" fill="none" stroke={colors.status} strokeWidth="4">
    <path d="M1 12Q23-8 45 12M7 18Q23 4 39 18M13 24Q23 16 33 24" />
    <circle cx="23" cy="30" r="3.2" fill={colors.status} stroke="none" />
    <path d="M35 27V38M30 33 35 38 40 33" />
    <path d="M48 37V25M43 30 48 25 53 30" stroke="#555" />
  </svg>
);

const SignalIcon = () => (
  <svg width="36" height="42" viewBox="0 0 36 42" strokeWidth="4" strokeLinecap="round">
    <path d="M3 33V38M13 24V38" stroke={colors.status} />
    <path d="M23 13V38M33 5V38" stroke="#4a4a4a" />
  </svg>
);

const BatteryIcon = () => (
  <svg width="27" height="42" viewBox="0 0 27 42">
    <path d="M7 1h13v6h7v12H0V7h7Z" fill="#4a4a4a" />
    <path d="M0 17h27v22a2 2 0 0 1-2 2H2a2 2 0 0 1-2-2Z" fill={colors.status} />
  </svg>
);

const BackIcon = () => (
  <svg width="56" height="56" viewBox="0 0 56 56" fill="none" stroke="#fff" strokeWidth="6.5">
    <path d="M55 28H6M30 3 5 28 30 53" />
  </svg>
);

const MoreIcon = () => (
  <svg width="16" height="56" viewBox="0 0 16 56" fill="#fff">
    <circle cx="8" cy="8" r="7" />
    <circle cx="8" cy="28" r="7" />
    <circle cx="8" cy="48" r="7" />
  </svg>
);

const ActionIcon = ({ children }) => (
  <svg width="72" height="72" viewBox="0 0 72 72" fill="none" stroke="currentColor" strokeWidth="3.5">
    {children}
  </svg>
);

const ACTIONS = [
  {
    label: "J'aime",
    icon: <path d="M36 60 9 33C-2 16 22-4 36 14 50-4 74 16 63 33Z" />,
  },
  {
    label: 'Commenter',
    icon: <path d="M18 53C8 46 5 38 5 30 5 4 66 4 67 30 66 46 50 57 29 55 24 60 18 66 10 65 16 62 20 57 18 53Z" />,
  },
  {
    label: 'Ajouter une photo',
    icon: (
      <>
        <rect x="4" y="16" width="64" height="50" rx="9" />
        <circle cx="36" cy="43" r="14.5" />
      </>
    ),
  },
  {
    label: 'Partager',
    icon: (
      <>
        <path d="M53 18 18 36 53 53" strokeWidth="5" />
        <circle cx="17.5" cy="36" r="9" fill="currentColor" stroke="none" />
        <circle cx="53" cy="53.5" r="9" fill="currentColor" stroke="none" />
        <circle cx="53" cy="18" r="9" fill="currentColor" stroke="none" />
      </>
    ),
  },
];

const TABS = [
  {
    label: 'Carte',
    icon: (
      <>
        <rect x="5" y="12" width="75" height="56" fill="none" stroke="currentColor" strokeWidth="6" />
        <path d="M12.7 19.5H38C35 24 40 25 45 23 52 21 54 28 48 30 44 32 35 31 35 35 35 37 38 38 38 41 38 46 30 42 27 44 25 47 32 47 32 50 32 53 26 53 24 60H12.7Z" />
        <path d="M45 49C45 40 49 36 57 36 62 36 67 31 68 37 68 42 55 43 53 50 52 54 45 54 45 49Z" />
      </>
    ),
  },
  {
    label: 'Résumé',
    icon: (
      <>
        <path fillRule="evenodd" d="M29.500 2H70V78H14V17ZM36.500 8V24.500H20V71.500H63.500V8Z" />
        <circle cx="27.500" cy="36.500" r="3" />
        <circle cx="27.500" cy="47.500" r="3" />
        <circle cx="27.500" cy="59" r="3" />
        <path d="M34 34h24v5H34ZM34 45h24v5H34ZM34 56h24v5H34Z" />
      </>
    ),
  },
  {
    label: 'Tours',
    icon: (
      <>
        <path d="M59 58.500A17 17 0 0 0 59 24.500H25A17 17 0 0 0 25 58.500H34" fill="none" stroke="currentColor" strokeWidth="7.500" />
        <path d="M32 43 47 58 32 73Z" />
      </>
    ),
  },
  {
    label: 'Graphiques',
    icon: (
      <g fill="none" stroke="currentColor">
        <rect x="8.500" y="13.500" width="67" height="53" strokeWidth="6" />
        <path d="M17 44 26 39 33 47 42 25 51 55 59 34 65 47" strokeWidth="3.500" />
      </g>
    ),
  },
];

const PulseIcon = () => (
  <svg width="66" height="72" viewBox="-1 0 66 72" fill="none" stroke={colors.orange}>
    <circle cx="32" cy="32.500" r="31" strokeWidth="3.500" />
    <path d="M7 34.500 16 29 22 37.500 31.500 15 40 46 48 25 54 37.500" strokeWidth="3.500" />
  </svg>
);

const SunIcon = () => (
  <svg width="86" height="88" viewBox="-43 -44 86 88">
    <g stroke={colors.orange} strokeWidth="3.500">
      {Array.from({ length: 20 }, (_, i) => (
        <path key={i} d="M0-29V-43" transform={`rotate(${i * 18})`} />
      ))}
    </g>
    <circle r="29.500" fill={colors.orange} />
    <circle r="25.500" fill={colors.orange} stroke="#4a3a1c" strokeWidth="3" />
  </svg>
);

const CompassIcon = () => (
  <svg width="106" height="106" viewBox="0 0 106 106">
    <circle cx="53" cy="53" r="50" fill="none" stroke="#fff" strokeWidth="4" />
    <path d="M44 4H62L53 28Z" fill="#fff" />
  </svg>
);

const DIALS = [
  { value: '18:15', label: 'Temps', ring: '#2ea3dc, #4c8fd0 40%, #7f69b0' },
  { value: '29,44', label: 'Distance (km)', ring: '#f07c22, #f89e26', raised: true },
  { value: '118', label: 'Calories', ring: '#2fb37c, #25b86a 30%, #0aff0a 90%' },
];

const MEASURES = [
  { value: '96,8', label: 'Vitesse moy. (km/h)' },
  { value: '144', label: "Gain d'alt. (m)" },
];

export default function App() {
  return (
    <Screen>
      <GlobalStyle />
      <StatusBar>
        <StatusGroup $gap={16}>
          <StatusText $clock>18:31</StatusText>
          <GmailIcon />
          <InterMark>inter</InterMark>
          <InterMark>inter</InterMark>
          <DotsIcon />
        </StatusGroup>
        <StatusGroup $gap={10}>
          <VoLte>
            <VoLine>
              Vo
              <WavesIcon />
            </VoLine>
            <span>LTE</span>
          </VoLte>
          <WifiIcon />
          <SignalIcon />
          <StatusText>71%</StatusText>
          <BatteryIcon />
        </StatusGroup>
      </StatusBar>

      <Header>
        <IconButton aria-label="Retour">
          <BackIcon />
        </IconButton>
        <Title>Buchelay Cyclisme</Title>
        <IconButton aria-label="Plus d'options">
          <MoreIcon />
        </IconButton>
      </Header>

      <Content>
        <ScrollThumb />
        <Actions>
          {ACTIONS.map((a) => (
            <ActionButton key={a.label} aria-label={a.label}>
              <ActionIcon>{a.icon}</ActionIcon>
            </ActionButton>
          ))}
        </Actions>

        <Tabs role="tablist">
          {TABS.map((t, i) => (
            <Tab key={t.label} role="tab" aria-label={t.label} aria-selected={i === 0} $active={i === 0}>
              <svg width="84" height="80" viewBox="0 0 84 80" fill="currentColor">
                {t.icon}
              </svg>
            </Tab>
          ))}
        </Tabs>

        <Dials>
          {DIALS.map((d) => (
            <Dial key={d.label} $raised={d.raised}>
              <Ring $ring={d.ring}>
                <DialValue>{d.value}</DialValue>
                <DialLabel $long={d.raised}>{d.label}</DialLabel>
              </Ring>
            </Dial>
          ))}
        </Dials>

        <Measures>
          {MEASURES.map((m) => (
            <Measure key={m.label}>
              <MeasureRow>
                <MeasureValue>{m.value}</MeasureValue>
                <PulseIcon />
              </MeasureRow>
              <MeasureLabel>{m.label}</MeasureLabel>
            </Measure>
          ))}
        </Measures>

        <MapPanel>
          <RouteMap />
          <Weather>
            <Temperature>33°</Temperature>
            <SunIcon />
            <Wind>
              <CompassIcon />
              <WindValue>7</WindValue>
            </Wind>
          </Weather>
        </MapPanel>
      </Content>

      <NavBar>
        <IconButton aria-label="Applications récentes">
          <svg width="52" height="54" viewBox="0 0 52 54" stroke="currentColor" strokeWidth="6.500" strokeLinecap="round">
            <path d="M6 5V49M26 5V49M46 5V49" />
          </svg>
        </IconButton>
        <IconButton aria-label="Accueil">
          <svg width="56" height="56" viewBox="0 0 56 56" fill="none" stroke="currentColor" strokeWidth="6.500">
            <rect x="4.500" y="4.500" width="47" height="47" rx="15" />
          </svg>
        </IconButton>
        <IconButton aria-label="Précédent">
          <svg width="36" height="54" viewBox="0 0 36 54" fill="none" stroke="currentColor" strokeWidth="6.500" strokeLinecap="round">
            <path d="M30 5 6 27 30 49" />
          </svg>
        </IconButton>
      </NavBar>
    </Screen>
  );
}
